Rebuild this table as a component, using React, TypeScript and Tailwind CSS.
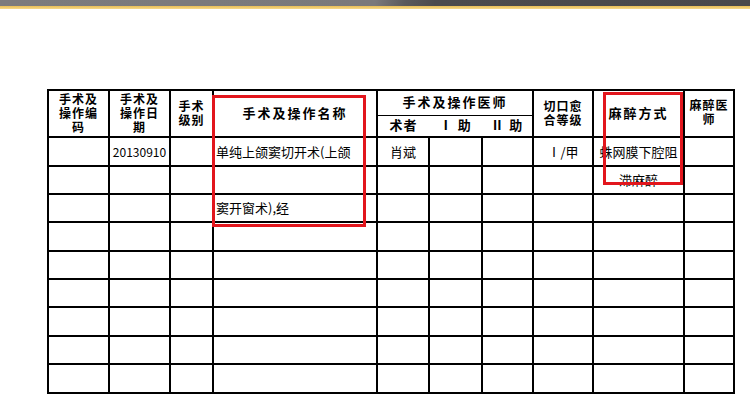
import React from 'react';

type Row = {
  date?: string;
  name?: string;
  surgeon?: string;
  heal?: string;
  anes?: string;
};

// surgery record rows, continuation lines wrap into the next row
const rows: Row[] = [
  { date: '20130910', name: '单纯上颌窦切开术(上颌', surgeon: '肖斌', heal: 'Ⅰ/甲', anes: '蛛网膜下腔阻' },
  { anes: '滞麻醉' },
  { name: '窦开窗术),经' },
  {},
  {},
  {},
  {},
  {},
  {},
];

const heights = ['h-[29px]', 'h-[28px]', 'h-[28px]', 'h-[29px]', 'h-[28px]', 'h-[28px]', 'h-[29px]', 'h-[28px]', 'h-[29px]'];

const cell = 'border-2 border-black p-0 align-middle';
const th = `${cell} font-bold text-[12px] leading-[14px] tracking-[1px] text-center font-['Liberation_Sans','Noto_Sans_CJK_SC',sans-serif]`;

const App = () => {
  return (
    <div
      className="relative w-[750px] h-[398px] bg-white overflow-hidden text-black"
      style={{ fontFamily: '"Noto Sans CJK SC", "Noto Sans", sans-serif' }}
    >
      {/* window chrome strip */}
      <div className="h-[6px] bg-[linear-gradient(99deg,#7c7b7d_0%,#7a797b_50%,#5a595b_54%,#4c4b4d_58%,#4a494b_100%)]" />
      <div className="h-[3px] bg-[linear-gradient(to_bottom,#e8bd55,#f6d98a)]" />

      <table className="table-fixed border-collapse ml-[47px] mt-[80px] w-[686px]">
        <colgroup>
          <col className="w-[61px]" />
          <col className="w-[61px]" />
          <col className="w-[43px]" />
          <col className="w-[164px]" />
          <col className="w-[52px]" />
          <col className="w-[53px]" />
          <col className="w-[51px]" />
          <col className="w-[60px]" />
          <col className="w-[91px]" />
          <col className="w-[50px]" />
        </colgroup>
        <thead>
          <tr className="h-[25px]">
            <th rowSpan={2} className={th}>
              手术及<br />操作编<br />码
            </th>
            <th rowSpan={2} className={th}>
              手术及<br />操作日<br />期
            </th>
            <th rowSpan={2} className={th}>
              手术<br />级别
            </th>
            <th rowSpan={2} className={`${th} !tracking-[2px] text-[13px]`}>
              手术及操作名称
            </th>
            <th colSpan={3} className={`${th} border-b !tracking-[2px] text-[13px]`}>
              手术及操作医师
            </th>
            <th rowSpan={2} className={th}>
              切口愈<br />合等级
            </th>
            <th rowSpan={2} className={`${th} !tracking-[2px] text-[13px]`}>
              麻醉方式
            </th>
            <th rowSpan={2} className={`${th} align-top pt-[8px]`}>
              麻醉医<br />师
            </th>
          </tr>
          <tr className="h-[22px]">
            <th className={`${th} border-t border-x-0 text-[13px]`}>术者</th>
            <th className={`${th} border-t border-x-0 text-[13px]`}>Ⅰ 助</th>
            <th className={`${th} border-t border-x-0 text-[13px]`}>Ⅱ 助</th>
          </tr>
        </thead>
        <tbody className="text-[13px] leading-[14px]">
          {rows.map((r, i) => (
            <tr key={i} className={heights[i]}>
              <td className={cell} />
              <td className={`${cell} text-center text-[12px]`}>{r.date}</td>
              <td className={cell} />
              <td className={`${cell} pl-[2px] whitespace-nowrap`}>{r.name}</td>
              <td className={`${cell} text-center`}>{r.surgeon}</td>
              <td className={cell} />
              <td className={cell} />
              <td className={`${cell} text-center`}>{r.heal}</td>
              <td className={`${cell} text-center whitespace-nowrap`}>{r.anes}</td>
              <td className={cell} />
            </tr>
          ))}
        </tbody>
      </table>

      {/* red highlight frames */}
      <div className="absolute left-[212px] top-[95px] w-[154px] h-[132px] border-[3px] border-[#e2161d]" />
      <div className="absolute left-[603px] top-[92px] w-[80px] h-[93px] border-[3px] border-[#e2161d]" />
    </div>
  );
};

export default App;
